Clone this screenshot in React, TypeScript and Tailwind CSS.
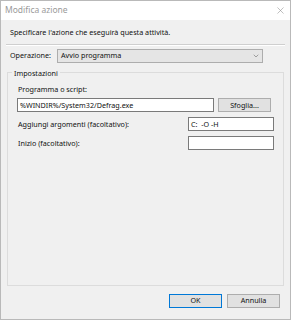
import { ChevronDown, X } from "lucide-react";

const font = { fontFamily: '"Noto Sans", "Open Sans", sans-serif' };

function TextBox({ value, className }: { value?: string; className: string }) {
  return (
    <div
      className={`h-[14px] border border-[#7a7a7a] bg-white px-[2px] flex items-center text-[7.2px] text-[#111] leading-none whitespace-pre ${className}`}
    >
      {value}
    </div>
  );
}

function Button({ label, primary }: { label: string; primary?: boolean }) {
  return (
    <div
      className={`w-[53px] h-[14px] flex items-center justify-center text-[7.2px] text-[#111] leading-none bg-[#e1e1e1] border ${
        primary ? "border-[#0078d7]" : "border-[#adadad]"
      }`}
    >
      {label}
    </div>
  );
}

export default function App() {
  return (
    <div
      className="w-[291px] h-[320px] border border-[#b9b9b9] bg-[#f0f0f0] flex flex-col"
      style={font}
    >
      {/* barra del titolo */}
      <div className="h-[19px] bg-white flex items-center justify-between pl-[4px] pr-[4px]">
        <span className="text-[8.5px] text-[#9a9a9a] leading-none">Modifica azione</span>
        <X className="w-[11px] h-[11px] text-[#8c8c8c]" strokeWidth={1.2} />
      </div>

      <div className="flex flex-col px-[9px]">
        <div className="h-[23px] flex items-center mt-[1px] text-[7.2px] text-[#111] leading-none">
          Specificare l'azione che eseguirà questa attività.
        </div>
        <div className="-mx-[4px] border-t border-[#cfcfcf] border-b border-b-white" />

        <div className="flex items-center mt-[3px] h-[14px]">
          <span className="w-[47px] text-[7.2px] text-[#111] leading-none">Operazione:</span>
          <div className="w-[206px] h-[14px] border border-[#adadad] bg-[#e5e5e5] flex items-center justify-between pl-[3px] pr-[2px] text-[7.2px] text-[#111] leading-none">
            Avvio programma
            <ChevronDown className="w-[8px] h-[8px] text-[#555]" strokeWidth={1.5} />
          </div>
        </div>
      </div>

      {/* gruppo Impostazioni */}
      <div className="relative mx-[6px] mt-[9px] h-[214px] border border-[#dcdcdc] px-[9px] pt-[13px]">
        <span className="absolute -top-[6px] left-[4px] px-[2px] bg-[#f0f0f0] text-[7.2px] text-[#111] leading-[12px]">
          Impostazioni
        </span>
        <div className="text-[7.2px] text-[#111] leading-none ml-[1px]">Programma o script:</div>
        <div className="flex items-center gap-[4px] mt-[5px]">
          <TextBox value="%WINDIR%/System32/Defrag.exe" className="w-[197px]" />
          <Button label="Sfoglia..." />
        </div>
        <div className="flex items-center justify-between mt-[5px]">
          <span className="text-[7.2px] text-[#111] leading-none ml-[1px]">Aggiungi argomenti (facoltativo):</span>
          <TextBox value="C:  -O -H" className="w-[86px]" />
        </div>
        <div className="flex items-center justify-between mt-[5px]">
          <span className="text-[7.2px] text-[#111] leading-none ml-[1px]">Inizio (facoltativo):</span>
          <TextBox className="w-[86px]" />
        </div>
      </div>

      <div className="flex justify-end gap-[5px] pr-[10px] mt-[8px]">
        <Button label="OK" primary />
        <Button label="Annulla" />
      </div>
    </div>
  );
}
